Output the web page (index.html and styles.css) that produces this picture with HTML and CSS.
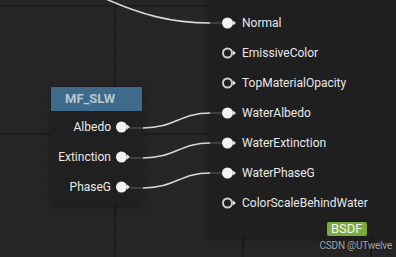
FILE: index.html
```html
<!DOCTYPE html>
<html lang="en">
<head>
  <meta charset="UTF-8" />
  <title>Material Graph</title>
  <link rel="stylesheet" href="styles.css">
</head>
<body>
  <div class="graph">

    <svg class="wires" width="396" height="257">
      <g class="wire-dim">
        <path d="M210 23 H222" />
        <path d="M130 128 H143 M210 113 H222" />
        <path d="M130 158 H143 M210 143 H222" />
        <path d="M130 188 H143 M210 173 H222" />
      </g>
      <g class="wire">
        <path d="M106 -1 C140 14, 170 23, 210 23" />
        <path d="M143 128 C175 128, 180 113, 210 113" />
        <path d="M143 158 C175 158, 180 143, 210 143" />
        <path d="M143 188 C175 188, 180 173, 210 173" />
      </g>
    </svg>

    <div class="node node-func">
      <div class="node-title">MF_SLW</div>
      <div class="node-body">
        <div class="row">Albedo <svg class="pin" viewBox="0 0 16 12"><circle cx="5.5" cy="6" r="5.5"/><path d="M11 3.5 L14 6 L11 8.5Z"/></svg></div>
        <div class="row">Extinction <svg class="pin" viewBox="0 0 16 12"><circle cx="5.5" cy="6" r="5.5"/><path d="M11 3.5 L14 6 L11 8.5Z"/></svg></div>
        <div class="row">PhaseG <svg class="pin" viewBox="0 0 16 12"><circle cx="5.5" cy="6" r="5.5"/><path d="M11 3.5 L14 6 L11 8.5Z"/></svg></div>
      </div>
    </div>

    <div class="node node-mat">
      <div class="row"><svg class="pin" viewBox="0 0 16 12"><circle cx="5.5" cy="6" r="5.5"/><path d="M11 3.5 L14 6 L11 8.5Z"/></svg> Normal</div>
      <div class="row"><svg class="pin hollow" viewBox="0 0 16 12"><circle cx="5.5" cy="6" r="4.5"/><path d="M11 3.5 L14 6 L11 8.5Z"/></svg> EmissiveColor</div>
      <div class="row"><svg class="pin hollow" viewBox="0 0 16 12"><circle cx="5.5" cy="6" r="4.5"/><path d="M11 3.5 L14 6 L11 8.5Z"/></svg> TopMaterialOpacity</div>
      <div class="row"><svg class="pin" viewBox="0 0 16 12"><circle cx="5.5" cy="6" r="5.5"/><path d="M11 3.5 L14 6 L11 8.5Z"/></svg> WaterAlbedo</div>
      <div class="row"><svg class="pin" viewBox="0 0 16 12"><circle cx="5.5" cy="6" r="5.5"/><path d="M11 3.5 L14 6 L11 8.5Z"/></svg> WaterExtinction</div>
      <div class="row"><svg class="pin" viewBox="0 0 16 12"><circle cx="5.5" cy="6" r="5.5"/><path d="M11 3.5 L14 6 L11 8.5Z"/></svg> WaterPhaseG</div>
      <div class="row"><svg class="pin hollow" viewBox="0 0 16 12"><circle cx="5.5" cy="6" r="4.5"/><path d="M11 3.5 L14 6 L11 8.5Z"/></svg> ColorScaleBehindWater</div>
      <div class="node-footer"><span class="badge">BSDF</span></div>
    </div>

    <div class="watermark">CSDN @UTwelve</div>
  </div>
</body>
</html>
```

FILE: styles.css
```css
body {
  margin: 0;
  font-family: Roboto, 'Liberation Sans', sans-serif;
}
.graph {
  position: relative;
  width: 396px;
  height: 257px;
  overflow: hidden;
  background-color: #262626;
  background-image:
    linear-gradient(to right, #1b1b1b 2px, transparent 2px),
    linear-gradient(to bottom, #1b1b1b 2px, transparent 2px),
    linear-gradient(to right, #222222 1px, transparent 1px),
    linear-gradient(to bottom, #222222 1px, transparent 1px);
  background-size: 128px 128px, 128px 128px, 16px 16px, 16px 16px;
  background-position: 114px 0, 0 5px, 3px 0, 0 6px;
}

/* nodes */
.node {
  position: absolute;
  color: #e8e8e8;
  font-size: 12px;
}
.node-func {
  left: 51px;
  top: 87px;
  width: 91px;
  box-shadow: 0 2px 6px rgba(0,0,0,0.35);
}
.node-title {
  height: 24px;
  line-height: 24px;
  padding-left: 14px;
  background: #3e6b8c;
  color: #b9c5ce;
  font-size: 13px;
  font-weight: bold;
}
.node-body {
  background: #202020;
  padding: 1px 10px 3px 0;
}
.node-func .row {
  justify-content: flex-end;
  gap: 5px;
}
.node-mat {
  left: 210px;
  top: -10px;
  width: 200px;
  height: 247px;
  padding: 18px 0 0 12px;
  box-sizing: border-box;
  background: #1f1f1f;
  box-shadow: -1px 2px 6px rgba(0,0,0,0.35);
}
.node-mat .row {
  gap: 4px;
}
.row {
  display: flex;
  align-items: center;
  height: 30px;
}

/* pins */
.pin {
  width: 16px;
  height: 12px;
  flex: none;
}
.pin circle {
  fill: #f2f2f2;
}
.pin path {
  fill: #e0e0e0;
}
.pin.hollow circle {
  fill: #1f1f1f;
  stroke: #d0d0d0;
  stroke-width: 2;
}
.node-footer {
  padding: 4px 0 0 105px;
}
.badge {
  display: inline-block;
  padding: 0 4px;
  height: 14px;
  line-height: 14px;
  background: #78ad3c;
  color: #f4f4f4;
  border-radius: 2px;
  font-size: 13px;
}

/* wires */
.wires {
  position: absolute;
  left: 0;
  top: 0;
  z-index: 2;
  pointer-events: none;
}
.wires path {
  fill: none;
}
.wire path {
  stroke: #d8d8d8;
  stroke-width: 1.6;
}
.wire-dim path {
  stroke: #4a4a4a;
  stroke-width: 1.6;
}

.watermark {
  position: absolute;
  right: 4px;
  bottom: 6px;
  color: #a4a4a4;
  font-size: 10px;
  letter-spacing: -0.2px;
  text-shadow: 0 0 2px rgba(0,0,0,0.6);
}
```
